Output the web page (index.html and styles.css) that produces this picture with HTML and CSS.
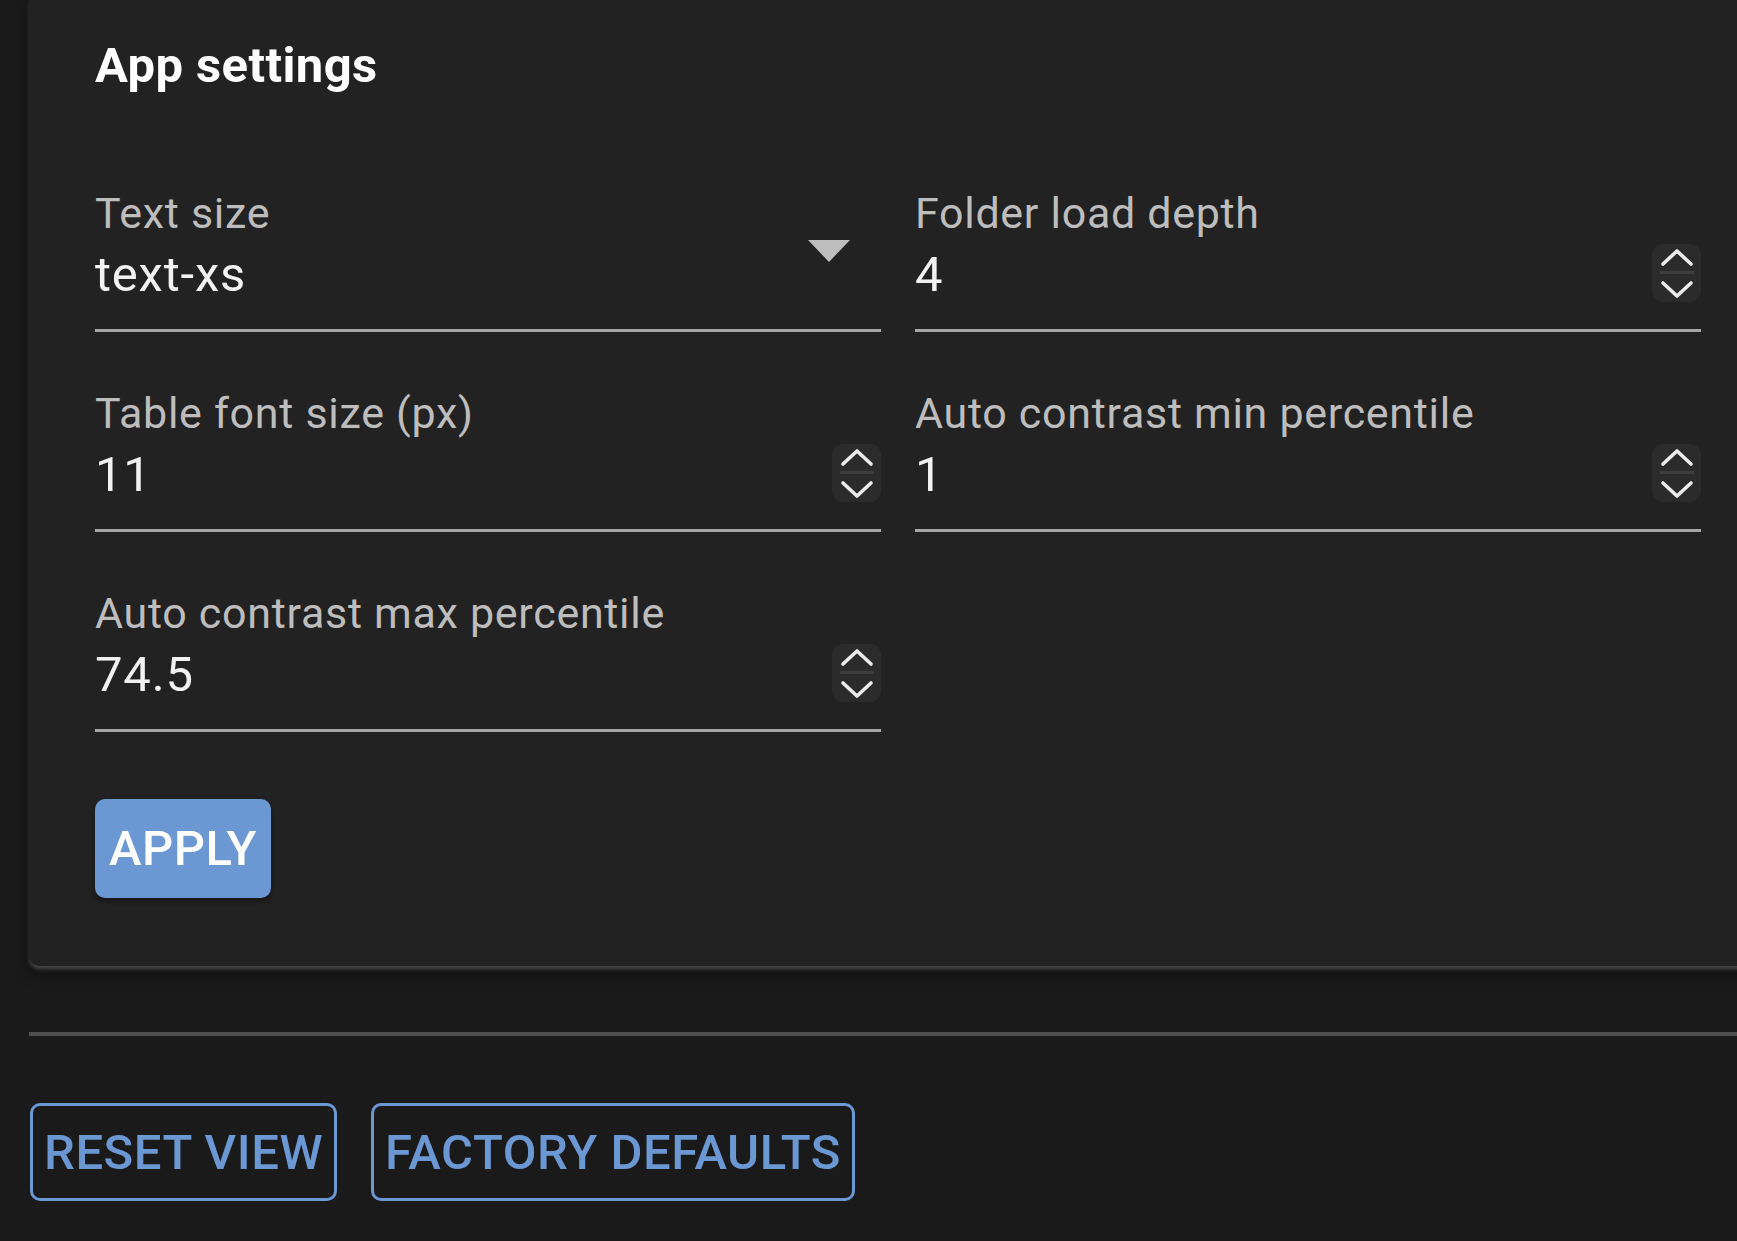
FILE: index.html
```html
<!DOCTYPE html>
<html lang="en">
<head>
    <meta charset="UTF-8">
    <meta name="viewport" content="width=device-width, initial-scale=1.0">
    <title>App settings</title>
    <link rel="stylesheet" href="styles.css">
</head>
<body>
    <div class="page">
        <section class="panel">
            <h2 class="panel-title">App settings</h2>

            <div class="fields">
                <div class="field">
                    <label class="field-label">Text size</label>
                    <div class="field-control">
                        <span class="field-value">text-xs</span>
                        <span class="select-arrow"></span>
                    </div>
                </div>

                <div class="field">
                    <label class="field-label">Folder load depth</label>
                    <div class="field-control">
                        <span class="field-value">4</span>
                        <span class="spinner">
                            <svg viewBox="0 0 49 58" width="49" height="58">
                                <polyline points="11,20 25,7 39,20" />
                                <line class="spinner-sep" x1="8" y1="28.5" x2="42" y2="28.5" />
                                <polyline points="11,39 25,52 39,39" />
                            </svg>
                        </span>
                    </div>
                </div>

                <div class="field">
                    <label class="field-label">Table font size (px)</label>
                    <div class="field-control">
                        <span class="field-value">11</span>
                        <span class="spinner">
                            <svg viewBox="0 0 49 58" width="49" height="58">
                                <polyline points="11,20 25,7 39,20" />
                                <line class="spinner-sep" x1="8" y1="28.5" x2="42" y2="28.5" />
                                <polyline points="11,39 25,52 39,39" />
                            </svg>
                        </span>
                    </div>
                </div>

                <div class="field">
                    <label class="field-label">Auto contrast min percentile</label>
                    <div class="field-control">
                        <span class="field-value">1</span>
                        <span class="spinner">
                            <svg viewBox="0 0 49 58" width="49" height="58">
                                <polyline points="11,20 25,7 39,20" />
                                <line class="spinner-sep" x1="8" y1="28.5" x2="42" y2="28.5" />
                                <polyline points="11,39 25,52 39,39" />
                            </svg>
                        </span>
                    </div>
                </div>

                <div class="field">
                    <label class="field-label">Auto contrast max percentile</label>
                    <div class="field-control">
                        <span class="field-value">74.5</span>
                        <span class="spinner">
                            <svg viewBox="0 0 49 58" width="49" height="58">
                                <polyline points="11,20 25,7 39,20" />
                                <line class="spinner-sep" x1="8" y1="28.5" x2="42" y2="28.5" />
                                <polyline points="11,39 25,52 39,39" />
                            </svg>
                        </span>
                    </div>
                </div>
            </div>

            <button class="btn-apply">APPLY</button>
        </section>

        <hr class="divider">

        <div class="actions">
            <button class="btn-outline">RESET VIEW</button>
            <button class="btn-outline">FACTORY DEFAULTS</button>
        </div>
    </div>
</body>
</html>
```

FILE: styles.css
```css
* {
    margin: 0;
    padding: 0;
    box-sizing: border-box;
}

body {
    font-family: Roboto, 'Noto Sans', sans-serif;
    background: #1a1a1a;
    color: #f0f0f0;
    overflow: hidden;
}

.page {
    padding-left: 29px;
    margin-right: -30px;
}

.panel {
    background: #222222;
    padding: 36px 66px 68px;
    border-radius: 0 0 10px 10px;
    box-shadow: 0 4px 4px -1px rgba(115, 115, 115, 0.6),
                0 8px 16px rgba(0, 0, 0, 0.45);
}

.panel-title {
    font-size: 49px;
    line-height: 59px;
    font-weight: 700;
    letter-spacing: 0.4px;
    color: #ffffff;
}

.fields {
    display: grid;
    grid-template-columns: 1fr 1fr;
    column-gap: 34px;
    row-gap: 56px;
    margin-top: 93px;
}

.field {
    display: flex;
    flex-direction: column;
}

.field-label {
    font-size: 43px;
    line-height: 50px;
    letter-spacing: 0.7px;
    color: #bdbdbd;
}

.field-control {
    display: flex;
    align-items: center;
    height: 88px;
    margin-top: 6px;
    padding-bottom: 27px;
    border-bottom: 3px solid #a6a6a6;
}

.field-value {
    flex: 1;
    padding-top: 3px;
    font-size: 49px;
    line-height: 58px;
    letter-spacing: 0.8px;
    color: #f2f2f2;
}

.select-arrow {
    align-self: flex-start;
    margin: -4px 31px 0 0;
    width: 0;
    height: 0;
    border-left: 21px solid transparent;
    border-right: 21px solid transparent;
    border-top: 22px solid #bdbdbd;
}

.spinner {
    display: flex;
    width: 49px;
    height: 58px;
    border-radius: 11px;
    background: #2b2b2b;
}

.spinner polyline {
    fill: none;
    stroke: #ececec;
    stroke-width: 3.6;
    stroke-linecap: round;
    stroke-linejoin: round;
}

.spinner-sep {
    stroke: #3e3e3e;
    stroke-width: 3;
}

.btn-apply {
    margin-top: 67px;
    height: 99px;
    padding: 0 14px;
    border: none;
    border-radius: 10px;
    background: #6b97d3;
    color: #ffffff;
    font-family: inherit;
    font-size: 49px;
    font-weight: 500;
    letter-spacing: 0.5px;
    box-shadow: 0 3px 6px rgba(0, 0, 0, 0.45);
    cursor: pointer;
}

.divider {
    margin-top: 66px;
    border: none;
    height: 4px;
    background: #4f4f4f;
}

.actions {
    display: flex;
    gap: 34px;
    margin-top: 67px;
    padding-left: 1px;
}

.btn-outline {
    height: 98px;
    padding: 0 11px;
    border: 3px solid #6b97d3;
    border-radius: 10px;
    background: transparent;
    color: #6b97d3;
    font-family: inherit;
    font-size: 49px;
    font-weight: 500;
    letter-spacing: 0.55px;
    cursor: pointer;
}
```
